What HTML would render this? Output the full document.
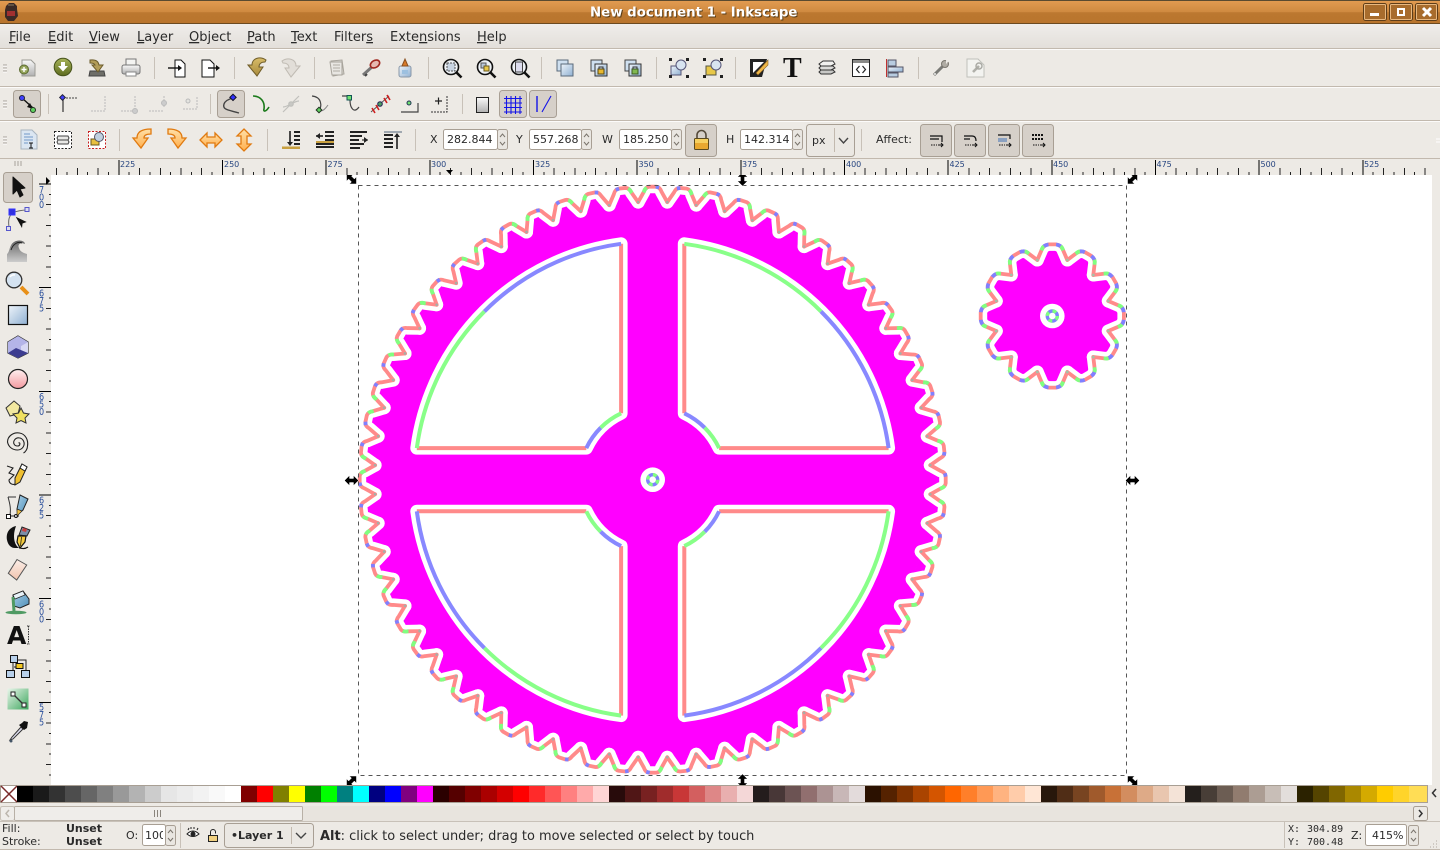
<!DOCTYPE html>
<html><head><meta charset="utf-8"><title>New document 1 - Inkscape</title>
<style>
html,body{margin:0;padding:0;background:#edeae5;width:1440px;height:850px;overflow:hidden}
svg{position:absolute;left:0;top:0;display:block}
text{font-family:"DejaVu Sans","Liberation Sans",sans-serif;fill:#2a2a2a}
.m{font-size:13px}.s{font-size:11px}.b{font-weight:bold}
.r{font-size:8px;fill:#274580}
.v{font-size:9.5px;fill:#2a4f9c}
#pal{position:absolute;left:17px;top:786px;height:16px;display:flex}
#pal i{display:block;width:16px;height:16px}
</style></head><body>
<svg width="1440" height="850" viewBox="0 0 1440 850" xmlns="http://www.w3.org/2000/svg">
<defs>
<linearGradient id="tg" x1="0" y1="0" x2="0" y2="1"><stop offset="0" stop-color="#e39c52"/><stop offset=".5" stop-color="#cf8a40"/><stop offset=".52" stop-color="#bc7830"/><stop offset="1" stop-color="#b8742c"/></linearGradient>
<linearGradient id="mg" x1="0" y1="0" x2="0" y2="1"><stop offset="0" stop-color="#efedea"/><stop offset="1" stop-color="#e3dfda"/></linearGradient>
<linearGradient id="bl" x1="0" y1="0" x2="1" y2="1"><stop offset="0" stop-color="#eef4fa"/><stop offset="1" stop-color="#8fb0d2"/></linearGradient>
<linearGradient id="gr" x1="0" y1="0" x2="0" y2="1"><stop offset="0" stop-color="#fafafa"/><stop offset="1" stop-color="#b0b0b0"/></linearGradient>
<linearGradient id="ol" x1="0" y1="0" x2="0" y2="1"><stop offset="0" stop-color="#a8b45a"/><stop offset="1" stop-color="#5d6b1e"/></linearGradient>
<linearGradient id="or" x1="0" y1="0" x2="0" y2="1"><stop offset="0" stop-color="#ffe0a8"/><stop offset="1" stop-color="#ffb050"/></linearGradient>
<linearGradient id="ug" x1="0" y1="0" x2="0" y2="1"><stop offset="0" stop-color="#d8bc68"/><stop offset="1" stop-color="#a88a3c"/></linearGradient>
<linearGradient id="pk" x1="0" y1="0" x2="0" y2="1"><stop offset="0" stop-color="#fff0f0"/><stop offset="1" stop-color="#f49aa0"/></linearGradient>
<linearGradient id="er" x1="0" y1="0" x2="0" y2="1"><stop offset="0" stop-color="#fbeee8"/><stop offset="1" stop-color="#f2c4ae"/></linearGradient>
<linearGradient id="gd" x1="0" y1="0" x2="1" y2="1"><stop offset="0" stop-color="#e8f5ea"/><stop offset="1" stop-color="#3fa85f"/></linearGradient>
<linearGradient id="wv" x1="0" y1="0" x2="0" y2="1"><stop offset="0" stop-color="#666"/><stop offset="1" stop-color="#ccc"/></linearGradient>
<linearGradient id="bk" x1="0" y1="0" x2="1" y2="1"><stop offset="0" stop-color="#a8d0e8"/><stop offset="1" stop-color="#4f8fb8"/></linearGradient>
<clipPath id="cv"><rect x="51" y="175" width="1381" height="610"/></clipPath>
<clipPath id="rt"><rect x="54" y="158" width="1378" height="18"/></clipPath>
<clipPath id="rl"><rect x="35" y="177" width="17" height="608"/></clipPath>

<!-- large gear tooth chain -->
<path id="L0" d="M-14.55,-277.6 L-8.8,-288 Q-7.2,-292.6 -3.5,-293 L3.5,-293 Q7.2,-292.6 8.8,-288 L14.55,-277.6"/>
<g id="L1"><use href="#L0"/><use href="#L0" transform="rotate(6)"/></g>
<g id="L2"><use href="#L1"/><use href="#L1" transform="rotate(12)"/><use href="#L1" transform="rotate(24)"/></g>
<g id="L3"><use href="#L2"/><use href="#L2" transform="rotate(36)"/><use href="#L2" transform="rotate(72)"/><use href="#L2" transform="rotate(108)"/><use href="#L2" transform="rotate(144)"/></g>
<g id="L4"><use href="#L3"/><use href="#L3" transform="rotate(180)"/></g>
<g id="D0"><path d="M-9.2,-287.3 L-8.8,-288 Q-8,-290.6 -6,-292" stroke="#80ff80"/><path d="M3,-293 L6.4,-292.2" stroke="#8080ff"/><circle cx="14.55" cy="-277.6" r="1.3" fill="#a4b0a8"/></g>
<g id="D0b"><path d="M-6.4,-292.2 L-3,-293" stroke="#8080ff"/><path d="M6,-292 Q8,-290.6 8.8,-288 L9.2,-287.3" stroke="#80ff80"/><circle cx="14.55" cy="-277.6" r="1.3" fill="#a4b0a8"/></g>
<g id="D1"><use href="#D0"/><use href="#D0b" transform="rotate(6)"/></g>
<g id="D2"><use href="#D1"/><use href="#D1" transform="rotate(12)"/><use href="#D1" transform="rotate(24)"/></g>
<g id="D3"><use href="#D2"/><use href="#D2" transform="rotate(36)"/><use href="#D2" transform="rotate(72)"/><use href="#D2" transform="rotate(108)"/><use href="#D2" transform="rotate(144)"/></g>
<g id="D4"><use href="#D3"/><use href="#D3" transform="rotate(180)"/></g>

<!-- small gear chain -->
<path id="S0" d="M-15,-56 L-10.5,-66.5 Q-8.500,-71 -3.500,-71.600 L3.500,-71.600 Q8.500,-71 10.5,-66.5 L15,-56"/>
<g id="S1"><use href="#S0"/><use href="#S0" transform="rotate(30)"/><use href="#S0" transform="rotate(60)"/></g>
<g id="S2"><use href="#S1"/><use href="#S1" transform="rotate(90)"/><use href="#S1" transform="rotate(180)"/><use href="#S1" transform="rotate(270)"/></g>
<g id="T0"><path d="M-10.9,-65.6 L-10.5,-66.5 Q-10,-68.500 -8.4,-69.8" stroke="#80ff80"/><path d="M-8.4,-69.8 Q-6.500,-71.2 -3.8,-71.5" stroke="#8080ff"/><path d="M3.8,-71.5 Q6.500,-71.2 8.4,-69.8" stroke="#8080ff"/><path d="M8.4,-69.8 Q10,-68.500 10.5,-66.5 L10.9,-65.6" stroke="#80ff80"/><circle cx="15" cy="-56" r="1.4" fill="#a4c0a8"/></g>
<g id="T1"><use href="#T0"/><use href="#T0" transform="rotate(30)"/><use href="#T0" transform="rotate(60)"/></g>
<g id="T2"><use href="#T1"/><use href="#T1" transform="rotate(90)"/><use href="#T1" transform="rotate(180)"/><use href="#T1" transform="rotate(270)"/></g>

<!-- quarter hole -->
<path id="Q" d="M-31.6,-235.9 L-31.6,-66.4 A73.5,73.5 0 0 0 -66.4,-31.6 L-235.9,-31.6 A238,238 0 0 1 -31.6,-235.9 Z"/>
<g id="QC" fill="none" stroke-width="4">
<path d="M-31.6,-235.9 L-31.6,-66.4" stroke="#ff8a8a"/>
<path d="M-66.4,-31.6 L-235.9,-31.6" stroke="#ff8a8a"/>
<path d="M-235.9,-31.6 A238,238 0 0 1 -168.3,-168.3" stroke="#88ff88"/>
<path d="M-168.3,-168.3 A238,238 0 0 1 -31.6,-235.9" stroke="#8888ff"/>
<path d="M-31.6,-66.4 A73.5,73.5 0 0 0 -52,-52" stroke="#88ff88"/>
<path d="M-52,-52 A73.5,73.5 0 0 0 -66.4,-31.6" stroke="#8888ff"/>
</g>
<g id="ring"><circle r="12.3" fill="#fff"/><circle r="5" fill="#fff" stroke="#8080ff" stroke-width="3.4"/><circle r="5" fill="none" stroke="#80ff80" stroke-width="3.4" stroke-dasharray="3.93 3.93"/></g>

<!-- spin -->
<g id="sp"><rect x=".5" y=".5" width="10" height="20" rx="2" fill="#e9e6e1" stroke="#a89f94"/><path d="M3,8 L5.5,5 L8,8 M3,13 L5.5,16 L8,13" fill="none" stroke="#7a746c"/></g>
<g id="grip"><path d="M3,0h4M3,3h4M3,6h4" stroke="#a8a29a"/><path d="M3,1h4M3,4h4M3,7h4" stroke="#fff"/></g>
<path id="ha" d="M-7,0 L-2,-5 V-2 H2 V-5 L7,0 L2,5 V2 H-2 V5 Z" fill="#000" stroke="#fff" stroke-width=".4"/>
<g id="lens"><circle cx="-1" cy="-1" r="7.5" fill="#eef2f6" stroke="#111" stroke-width="1.6"/><path d="M4.5,4.5 L9.5,9.5" stroke="#111" stroke-width="2.6"/></g>
</defs>

<!-- title bar -->
<rect width="1440" height="24" fill="url(#tg)"/>
<rect width="1440" height="1" fill="#5a4a30"/>
<rect y="23" width="1440" height="1" fill="#6b4a20"/>
<g transform="translate(11,12)"><path d="M-5,-6 L-2,-9 H3 L6,-6 V-3 L7,4 L3,9 H-3 L-6,5 L-6,-2 Z" fill="#3a2a26"/><rect x="-4" y="-1" width="8" height="5" fill="#a03030"/><path d="M-3,-7h6" stroke="#8a7a60"/></g>
<text x="590" y="16.5" class="b" font-size="13.33" style="fill:#3a2a10" opacity=".75" dx="1" dy="1">New document 1 - Inkscape</text>
<text x="590" y="16.5" class="b" font-size="13.33" style="fill:#fff">New document 1 - Inkscape</text>
<g fill="#a86c2c" stroke="#5e3d18"><rect x="1363.5" y="3.5" width="23" height="17" rx="2"/><rect x="1389.5" y="3.5" width="23" height="17" rx="2"/><rect x="1415.5" y="3.5" width="22" height="17" rx="2"/></g>
<g fill="none" stroke="#e8b880"><rect x="1364.5" y="4.5" width="21" height="15" rx="1"/><rect x="1390.5" y="4.5" width="21" height="15" rx="1"/><rect x="1416.5" y="4.5" width="20" height="15" rx="1"/></g>
<rect x="1370" y="13" width="9" height="3" fill="#fff"/>
<rect x="1398" y="9" width="6" height="6" fill="none" stroke="#fff" stroke-width="2"/>
<path d="M1423,8 L1431,16 M1431,8 L1423,16" stroke="#fff" stroke-width="3"/>

<!-- menu -->
<rect y="24" width="1440" height="24" fill="url(#mg)"/>
<rect y="48" width="1440" height="1" fill="#c2b9ae"/><rect y="49" width="1440" height="1" fill="#fff" opacity=".8"/>
<g class="m">
<text class="m" x="9" y="41"><tspan text-decoration="underline">F</tspan>ile</text>
<text class="m" x="48" y="41"><tspan text-decoration="underline">E</tspan>dit</text>
<text class="m" x="89" y="41"><tspan text-decoration="underline">V</tspan>iew</text>
<text class="m" x="137" y="41"><tspan text-decoration="underline">L</tspan>ayer</text>
<text class="m" x="189" y="41"><tspan text-decoration="underline">O</tspan>bject</text>
<text class="m" x="247" y="41"><tspan text-decoration="underline">P</tspan>ath</text>
<text class="m" x="291" y="41"><tspan text-decoration="underline">T</tspan>ext</text>
<text class="m" x="334" y="41">Filter<tspan text-decoration="underline">s</tspan></text>
<text class="m" x="390" y="41">Exte<tspan text-decoration="underline">n</tspan>sions</text>
<text class="m" x="477" y="41"><tspan text-decoration="underline">H</tspan>elp</text>
</g>

<!-- toolbar lines -->
<rect y="86" width="1440" height="1" fill="#c2b9ae"/><rect y="87" width="1440" height="1" fill="#fff" opacity=".8"/>
<rect y="120" width="1440" height="1" fill="#c2b9ae"/><rect y="121" width="1440" height="1" fill="#fff" opacity=".8"/>
<rect y="158" width="1440" height="1" fill="#c2b9ae"/>
<use href="#grip" y="65"/><use href="#grip" y="101"/><use href="#grip" y="137"/>
<path d="M15,161v5M18,161v5M21,161v5" stroke="#a8a29a"/>
<path d="M1436,139h4M1436,142h4" stroke="#fff"/>

<!-- separators -->
<g fill="#c8c1b8"><rect x="154" y="57" width="1" height="22"/><rect x="234" y="57" width="1" height="22"/><rect x="314" y="57" width="1" height="22"/><rect x="428" y="57" width="1" height="22"/><rect x="541" y="57" width="1" height="22"/><rect x="656" y="57" width="1" height="22"/><rect x="735" y="57" width="1" height="22"/><rect x="918" y="57" width="1" height="22"/>
<rect x="48" y="94" width="1" height="20"/><rect x="210" y="94" width="1" height="20"/><rect x="462" y="94" width="1" height="20"/>
<rect x="119" y="129" width="1" height="22"/><rect x="267" y="129" width="1" height="22"/><rect x="415" y="129" width="1" height="22"/><rect x="861" y="129" width="1" height="22"/></g>

<!-- toolbar 1 icons -->
<g transform="translate(28,68)"><path d="M-6,-8H3L7,-4V8H-6Z" fill="url(#gr)" stroke="#9a9a94"/><circle cx="-4" cy="1.500" r="4.500" fill="#94a45a" stroke="#5a6a30"/><path d="M-6.500,1.500h5M-4,-1v5" stroke="#fff" stroke-width="1.400"/></g>
<g transform="translate(63,67)"><circle r="8.800" fill="url(#ol)" stroke="#46521a"/><path d="M-2,-5H2V-1H5L0,4.500L-5,-1H-2Z" fill="#fff"/></g>
<g transform="translate(97,68)"><path d="M-7,3H7L8,8H-8Z" fill="#6e6e68" stroke="#444"/><path d="M-7,-8 Q1,-9 2,-3 H6 L1,4 L-5,-3 H-2 Q-3,-5 -7,-5Z" fill="#b29c58" stroke="#6c5c2c"/></g>
<g transform="translate(131,68)"><rect x="-5" y="-9" width="10" height="7" fill="#f4f4f2" stroke="#777"/><rect x="-9" y="-3" width="18" height="9" rx="2" fill="url(#gr)" stroke="#777"/><rect x="-5" y="4" width="10" height="4" fill="#fff" stroke="#888"/></g>
<g transform="translate(178,68)"><path d="M-3,-8H3L7,-4V9H-3Z" fill="#fff" stroke="#111"/><path d="M-10,0H2" stroke="#111" stroke-width="1.400"/><path d="M0,-3L4,0L0,3Z" fill="#111"/></g>
<g transform="translate(211,68)"><path d="M-9,-8H-1L3,-4V9H-9Z" fill="#fff" stroke="#111"/><path d="M-3,0H6" stroke="#111" stroke-width="1.400"/><path d="M5,-3L9,0L5,3Z" fill="#111"/></g>
<g transform="translate(257,67)"><path d="M-9,-2 L0,9 L6,0 H2 C2,-3 4,-5 8,-5 L9,-7 C3,-11 -5,-9 -5,-2Z" fill="url(#ug)" stroke="#6f5c28"/></g>
<g transform="translate(291,68)"><path d="M9,-2 L0,9 L-6,0 H-2 C-2,-3 -4,-5 -8,-5 L-9,-7 C-3,-11 5,-9 5,-2Z" fill="#e2ded8" stroke="#c0bbb3"/></g>
<g transform="translate(337,68)" stroke="#a8a49c"><path d="M-6,-7L5,-8L7,6L-4,8Z" fill="#dcdad5"/><path d="M-7,-6H5V7H-5Z" fill="#e8e6e2"/><path d="M-4,-3H3M-4,0H3M-4,3H3" stroke="#b0aca4"/></g>
<g transform="translate(371,68)"><path d="M-8,7 L2,-2" stroke="#777" stroke-width="3"/><path d="M-6,8 L-4,6" stroke="#444" stroke-width="2"/><ellipse cx="4" cy="-4" rx="5" ry="3.500" fill="#e6b8b0" stroke="#a02820" stroke-width="1.600" transform="rotate(-30 4 -4)"/></g>
<g transform="translate(405,68)"><rect x="-6" y="-2" width="12" height="11" rx="2" fill="url(#bl)" stroke="#8a98a8"/><path d="M-3,-2 L0,-9 L3,-2Z" fill="#d87a28" stroke="#8a5020"/><rect x="-3" y="2" width="6" height="4" fill="#9cc0e0"/></g>
<g transform="translate(452,68)"><use href="#lens"/><rect x="-5" y="-5" width="8" height="8" fill="#c8d4e2" stroke="#555" stroke-dasharray="2 1"/></g>
<g transform="translate(486,68)"><use href="#lens"/><rect x="-5" y="-5" width="5" height="5" fill="#b8c8dc" stroke="#555"/><rect x="-2" y="-2" width="5" height="5" fill="#e8c848" stroke="#6a5a20"/></g>
<g transform="translate(520,68)"><use href="#lens"/><rect x="-4.500" y="-6" width="7" height="10" fill="#dde" stroke="#444"/></g>
<g transform="translate(565,68)"><rect x="-8" y="-8" width="11" height="11" fill="#cfe0f0" stroke="#5a6a7a"/><rect x="-4" y="-4" width="12" height="12" fill="url(#bl)" stroke="#5a6a7a"/></g>
<g transform="translate(599,68)"><rect x="-8" y="-8" width="11" height="11" fill="#cfe0f0" stroke="#444"/><rect x="-4" y="-4" width="12" height="12" fill="url(#bl)" stroke="#333"/><rect x="-1" y="1" width="6" height="5" fill="#e8b830" stroke="#5a4a10"/><path d="M0,1v-2h4v2" fill="none" stroke="#333"/></g>
<g transform="translate(633,68)"><rect x="-8" y="-8" width="11" height="11" fill="#cfe0f0" stroke="#444"/><rect x="-4" y="-4" width="12" height="12" fill="url(#bl)" stroke="#333"/><rect x="-1" y="1" width="6" height="5" fill="#80b850" stroke="#3a5a20"/><path d="M0,1v-2h4v2" fill="none" stroke="#333"/></g>
<g transform="translate(679,68)"><rect x="-8" y="-2" width="10" height="9" fill="url(#bl)" stroke="#557"/><circle cx="2" cy="-3" r="5" fill="#d8e4f0" stroke="#557"/><path d="M-10,-10h3v3h-3zM7,-10h3v3h-3zM-10,7h3v3h-3zM7,7h3v3h-3z" fill="#222"/></g>
<g transform="translate(713,68)"><rect x="-7" y="-2" width="10" height="9" fill="#e8c848" stroke="#554"/><circle cx="3" cy="-3" r="5" fill="#d8e4f0" stroke="#557"/><path d="M-10,-10h3v3h-3zM7,-10h3v3h-3zM-10,7h3v3h-3zM7,7h3v3h-3z" fill="#222"/></g>
<g transform="translate(759,68)"><path d="M-9,-9H8L3,9H-9Z" fill="#222"/><path d="M-6,-6H5L-6,5Z" fill="#fff"/><path d="M9,-8 L-3,5 L-1,7 L9,-3Z" fill="#f0b848" stroke="#8a6020" stroke-width=".6"/></g>
<text x="783" y="77" font-size="28" font-weight="bold" style='font-family:"Liberation Serif",serif;fill:#111'>T</text>
<g transform="translate(827,68)" fill="#f2f2f0" stroke="#333"><path d="M-8,-4L-4,-7H6L8,-4L4,-2H-6Z"/><path d="M-8,0L-6,-2H6L8,0L4,2H-6Z" fill="#dcdcda"/><path d="M-8,4L-6,2H6L8,4L4,6H-6Z" fill="#c8c8c6"/></g>
<g transform="translate(861,68)"><rect x="-8.500" y="-8.500" width="17" height="17" fill="#fff" stroke="#222"/><rect x="-8" y="-8" width="16" height="3" fill="#8a8a88"/><path d="M-1.500,-2L-4.500,1.500L-1.500,5M1.500,-2L4.500,1.500L1.500,5" fill="none" stroke="#222" stroke-width="1.200"/></g>
<g transform="translate(895,68)"><rect x="-9" y="-9" width="1" height="18" fill="#c03030"/><rect x="-7" y="-8" width="8" height="6" fill="#b8cce0" stroke="#556"/><rect x="-7" y="-1" width="15" height="5" fill="url(#bl)" stroke="#556"/><rect x="-7" y="5" width="10" height="4" fill="#b8cce0" stroke="#556"/></g>
<g transform="translate(941,68)"><path d="M-7,7 L3,-3" stroke="#7a7a76" stroke-width="3"/><circle cx="4" cy="-4" r="3.500" fill="#b0aca4" stroke="#7a766e"/><path d="M5,-8L8,-7L5,-4Z" fill="#edeae5"/><circle cx="-6" cy="6" r="1" fill="#eee"/></g>
<g transform="translate(975,68)"><path d="M-8,-9H3L9,-3V9H-8Z" fill="#f3f3f0" stroke="#c0c0ba"/><path d="M-2,4 L4,-2" stroke="#b0b0aa" stroke-width="2.600"/><circle cx="4" cy="-2" r="3" fill="none" stroke="#a8a8a2" stroke-width="1.400"/></g>

<!-- toolbar 2 -->
<rect x="13.500" y="90.500" width="27" height="27" rx="3" fill="#d6d0c9" stroke="#a89f94"/>
<rect x="217.500" y="90.500" width="27" height="27" rx="3" fill="#d6d0c9" stroke="#a89f94"/>
<rect x="499.500" y="90.500" width="27" height="27" rx="3" fill="#d6d0c9" stroke="#a89f94"/>
<rect x="529.500" y="90.500" width="27" height="27" rx="3" fill="#d6d0c9" stroke="#a89f94"/>
<g transform="translate(27,104)"><path d="M-5,-6L6,4" stroke="#111" stroke-width="1.400"/><path d="M3,-1L6,5L0,3Z" fill="#111"/><circle cx="-5" cy="-6" r="2.500" fill="#4040ff" stroke="#223"/><circle cx="6" cy="6" r="2.500" fill="#60d060" stroke="#232"/></g>
<g transform="translate(68,104)" fill="none"><path d="M-5,-6V8" stroke="#333" stroke-width="1.200"/><path d="M-2,-6H10" stroke="#444" stroke-dasharray="2 1"/><rect x="-7.500" y="-8.500" width="4" height="4" fill="#4040ff" stroke="#223" transform="rotate(45 -5.500 -6.500)"/></g>
<g transform="translate(98,104)" fill="none" stroke="#bbb" stroke-dasharray="2 1"><path d="M7,-8V7H-8"/></g>
<g transform="translate(128,104)" fill="none" stroke="#bbb"><path d="M7,-8V7H-8" stroke-dasharray="2 1"/><circle cx="7" cy="7" r="2.500" fill="#ccc"/></g>
<g transform="translate(157,104)" fill="none" stroke="#bbb"><path d="M7,-8V4M-8,7H7" stroke-dasharray="2 1"/><circle cx="7" cy="-1" r="2.500" fill="#ccc"/></g>
<g transform="translate(188,104)" fill="none" stroke="#bbb"><path d="M9,-7V5H-5" stroke-dasharray="2 1"/><rect x="-2" y="-5" width="4" height="4" rx="2" fill="#e4e4e0"/></g>
<g transform="translate(231,104)" fill="none"><path d="M8,9 C-2,6 -9,6 -7,0 C-6,-3 -2,-5 2,-6" stroke="#444" stroke-width="1.400"/><rect x="0" y="-9" width="4.500" height="4.500" fill="#3030ff" stroke="#112" transform="rotate(45 2 -7)"/></g>
<g transform="translate(261,104)" fill="none" stroke="#1a7a1a" stroke-width="1.600"><path d="M-8,-8 C0,-8 4,-2 3,5 C2,8 5,8 8,3"/></g>
<g transform="translate(291,104)" fill="none" stroke="#c0c0bc" stroke-width="1.200"><path d="M-8,8L8,-8M-8,3C-3,3 3,-3 8,-3"/><circle r="2.200" fill="#c8c8c4"/></g>
<g transform="translate(320,104)" fill="none"><path d="M-8,-8C2,-7 2,2 -1,7" stroke="#444" stroke-width="1.200"/><path d="M1,7C3,7 6,4 8,1" stroke="#888"/><rect x="-3" y="4" width="4" height="4" fill="#60d060" stroke="#232" transform="rotate(45 -1 6)"/></g>
<g transform="translate(350,104)" fill="none"><path d="M-8,-8H-2M0,-4C0,4 4,10 9,3" stroke="#444" stroke-width="1.200"/><rect x="-3" y="-8.500" width="4.500" height="4.500" fill="#70e070" stroke="#155"/></g>
<g transform="translate(380,104)" fill="none"><path d="M-9,8L9,-8" stroke="#555"/><path d="M-8,4L-5,9M-4,1L-1,6M4,-6L7,-1M7,-9L10,-4" stroke="#d02020" stroke-width="1.600"/><circle r="2.300" fill="#4aa060" stroke="#225"/></g>
<g transform="translate(409,104)" fill="none"><path d="M9,-1V8H-8" stroke="#444" stroke-width="1.200"/><circle cy="-1" r="2" fill="#70e070" stroke="#235"/></g>
<g transform="translate(439,104)" fill="none"><path d="M8,-8V8H-9" stroke="#333" stroke-dasharray="2 1"/><path d="M-4,-3H3M-0.500,-6.500V0.500" stroke="#222" stroke-width="1.200"/></g>
<rect x="476.500" y="97.500" width="12" height="15" fill="url(#gr)" stroke="#222"/>
<path d="M504,98.500H522M504,103H522M504,107.500H522M504,112H522M506.500,96V114M511,96V114M515.500,96V114M520,96V114" stroke="#1414e8" stroke-width="1.100"/>
<path d="M537,96V112" stroke="#1414e8" stroke-width="1.400"/><path d="M542,112L551,96" stroke="#1414e8" stroke-width="1.100"/>

<!-- toolbar 3 -->
<g transform="translate(29,140)"><path d="M-8,-10H3L8,-5V9H-8Z" fill="#dbe6f2" stroke="#a8b4c0"/><path d="M-5,-6H1M-5,-3H4M-5,0H4M-5,3H-1" stroke="#7098c8"/><path d="M0,3h4M2,3v5M0,8h4" stroke="#111"/></g>
<g transform="translate(63,140)"><rect x="-8.500" y="-8.500" width="17" height="17" fill="#fff" stroke="#222" stroke-dasharray="2 1.500"/><path d="M-5,-4H5L6,-2L5,0H-5L-6,-2ZM-5,0H5L6,2L5,4H-5L-6,2Z" fill="#e8e8e6" stroke="#444"/></g>
<g transform="translate(97,140)"><rect x="-8.500" y="-8.500" width="17" height="17" fill="#fff" stroke="#c82020" stroke-dasharray="2 1.500"/><rect x="-6" y="-1" width="8" height="6" fill="#e8c040" stroke="#6a5820"/><circle cx="2" cy="-3" r="4.500" fill="#c0d0e0" stroke="#556"/></g>
<g fill="url(#or)" stroke="#e07a10" stroke-width="1.300">
<g transform="translate(142,139)"><path d="M-9,-1 L-1,9 L6,-1 H2 C2,-4 5,-5 9,-5 V-10 C0,-10 -5,-7 -5,-1Z"/></g>
<g transform="translate(177,139)"><path d="M9,-1 L1,9 L-6,-1 H-2 C-2,-4 -5,-5 -9,-5 V-10 C0,-10 5,-7 5,-1Z"/></g>
<g transform="translate(211,140)"><path d="M-11,0 L-4,-7 V-3 H4 V-7 L11,0 L4,7 V3 H-4 V7Z"/></g>
<g transform="translate(244,140)"><path d="M0,-11 L7,-4 H3 V4 H7 L0,11 L-7,4 H-3 V-4 H-7Z"/></g>
</g>
<g fill="#222">
<g transform="translate(291,140)"><path d="M-1,-9V3" stroke="#111" stroke-width="1.500"/><path d="M-4,2H2L-1,6Z"/><path d="M3,-9h6v2h-6zM3,-5h6v2h-6zM3,-1h6v2h-6zM3,3h6v2h-6z"/><rect x="-9" y="6.500" width="18" height="2.500" fill="#c8a040"/></g>
<g transform="translate(325,140)"><path d="M-9,-4H-2" stroke="#111" stroke-width="1.500"/><path d="M-9,-4L-5,-7V-1Z"/><path d="M0,-9h9v2h-9zM0,-5h9v2h-9zM0,-1h9v2h-9zM-9,3h18v2h-18z"/><rect x="-9" y="1" width="18" height="2" fill="#c8a040"/><path d="M-9,6h18v2h-18z"/></g>
<g transform="translate(359,140)"><path d="M-9,-9h17v2h-17zM-9,-5h12v2h-12zM-9,-1h9v2h-9zM-9,3h14v2h-14zM-9,7h10v2h-10z"/><path d="M3,0H9" stroke="#111"/><path d="M9,0L5,-3V3Z"/></g>
<g transform="translate(393,140)"><rect x="-9" y="-9" width="18" height="2" fill="#a0a8b0"/><path d="M-9,-6h9v2h-9zM-9,-2h9v2h-9zM-9,2h9v2h-9zM-9,6h9v2h-9z"/><path d="M4,-6V9" stroke="#111" stroke-width="1.500"/><path d="M4,-7L1,-3H7Z"/></g>
</g>

<text class="s" x="430" y="143">X</text>
<rect x="443.500" y="129.500" width="54" height="20" rx="2" fill="#fff" stroke="#a89f94"/><text class="s" x="447" y="143">282.844</text><use href="#sp" x="497" y="129"/>
<text class="s" x="516" y="143">Y</text>
<rect x="529.500" y="129.500" width="52" height="20" rx="2" fill="#fff" stroke="#a89f94"/><text class="s" x="533" y="143">557.268</text><use href="#sp" x="581" y="129"/>
<text class="s" x="602" y="143">W</text>
<rect x="619.500" y="129.500" width="52" height="20" rx="2" fill="#fff" stroke="#a89f94"/><text class="s" x="623" y="143">185.250</text><use href="#sp" x="671" y="129"/>
<rect x="685.500" y="124.500" width="31" height="32" rx="3" fill="#d6d0c9" stroke="#a89f94"/>
<path d="M697,139v-4a4,4 0 0 1 9,0v4" fill="none" stroke="#554a3a" stroke-width="1.600"/><rect x="694.500" y="138.500" width="14" height="11" rx="1" fill="#e8a830" stroke="#5a4a20"/><rect x="695" y="139" width="13" height="4" fill="#f6d060"/>
<text class="s" x="726" y="143">H</text>
<rect x="740.500" y="129.500" width="52" height="20" rx="2" fill="#fff" stroke="#a89f94"/><text class="s" x="744" y="143">142.314</text><use href="#sp" x="792" y="129"/>
<rect x="806.500" y="124.500" width="48" height="32" rx="3" fill="#ebe8e3" stroke="#a89f94"/>
<text class="s" x="812" y="144">px</text><rect x="834" y="128" width="1" height="24" fill="#c2b9ae"/><path d="M839,138L843.500,143L848,138" fill="none" stroke="#444" stroke-width="1.400"/>
<text class="s" x="876" y="143">Affect:</text>
<g fill="#d6d0c9" stroke="#a89f94"><rect x="920.500" y="124.500" width="31" height="32" rx="3"/><rect x="954.500" y="124.500" width="31" height="32" rx="3"/><rect x="988.500" y="124.500" width="31" height="32" rx="3"/><rect x="1022.500" y="124.500" width="31" height="32" rx="3"/></g>
<g fill="none" stroke="#111">
<g transform="translate(936,140)"><path d="M-6,-4H6V2M-6,-1H3" stroke-width="1.200"/><path d="M-5,5H1" stroke-dasharray="1.500 1"/><path d="M2,5H7M5,3L7,5L5,7"/></g>
<g transform="translate(970,140)"><path d="M-6,-4H2Q6,-4 6,1M-6,-1H0" stroke-width="1.200"/><path d="M-5,5H1" stroke-dasharray="1.500 1"/><path d="M2,5H7M5,3L7,5L5,7"/></g>
<g transform="translate(1004,140)"><path d="M-6,-5H6V-1" stroke-width="1.200"/><rect x="-6" y="-2" width="9" height="4" fill="#8aa0c0" stroke="none"/><path d="M-5,5H1" stroke-dasharray="1.500 1"/><path d="M2,5H7M5,3L7,5L5,7"/></g>
<g transform="translate(1038,140)"><path d="M-6,-5H6M-6,-1H6" stroke-width="2" stroke-dasharray="2 1"/><path d="M-5,5H1" stroke-dasharray="1.500 1"/><path d="M2,5H7M5,3L7,5L5,7"/></g>
</g>

<!-- rulers -->
<g clip-path="url(#rt)" shape-rendering="crispEdges" stroke="#222" fill="none">
<line x1="14.630" y1="173.500" x2="1432" y2="173.500" stroke-width="3" stroke-dasharray="1 9.367"/>
<line x1="14.630" y1="171.500" x2="1432" y2="171.500" stroke-width="7" stroke-dasharray="1 19.734"/>
<line x1="14.630" y1="167.500" x2="1432" y2="167.500" stroke-width="15" stroke-dasharray="1 102.670" stroke="#000"/>
</g>
<g class="r">
<text class="r" x="120" y="167">225</text><text class="r" x="224" y="167">250</text><text class="r" x="327.500" y="167">275</text><text class="r" x="431" y="167">300</text><text class="r" x="535" y="167">325</text><text class="r" x="638.500" y="167">350</text><text class="r" x="742" y="167">375</text><text class="r" x="846" y="167">400</text><text class="r" x="949.500" y="167">425</text><text class="r" x="1053" y="167">450</text><text class="r" x="1156.500" y="167">475</text><text class="r" x="1260.500" y="167">500</text><text class="r" x="1364" y="167">525</text>
</g>
<path d="M446,170H453L449.500,174Z" fill="#000"/>
<g clip-path="url(#rl)" shape-rendering="crispEdges" stroke="#222" fill="none">
<line x1="50" y1="79.830" x2="50" y2="785" stroke-width="2" stroke-dasharray="1 9.367"/>
<line x1="48.500" y1="79.830" x2="48.500" y2="785" stroke-width="5" stroke-dasharray="1 19.734"/>
<line x1="45" y1="79.830" x2="45" y2="785" stroke-width="12" stroke-dasharray="1 102.670" stroke="#000"/>
</g>
<g text-anchor="middle" transform="translate(41.5,0) scale(.85,1)">
<text class="v" x="0" y="193">7</text><text class="v" x="0" y="200.500">0</text><text class="v" x="0" y="208">0</text>
<text class="v" x="0" y="296.500">6</text><text class="v" x="0" y="304">7</text><text class="v" x="0" y="311.500">5</text>
<text class="v" x="0" y="400">6</text><text class="v" x="0" y="407.500">5</text><text class="v" x="0" y="415">0</text>
<text class="v" x="0" y="503.500">6</text><text class="v" x="0" y="511">2</text><text class="v" x="0" y="518.500">5</text>
<text class="v" x="0" y="607.500">6</text><text class="v" x="0" y="615">0</text><text class="v" x="0" y="622.500">0</text>
<text class="v" x="0" y="710.500">5</text><text class="v" x="0" y="718">7</text><text class="v" x="0" y="725.500">5</text>
</g>

<!-- canvas -->
<rect x="51" y="175" width="1381" height="610" fill="#fff"/>
<path d="M46,177V185L50,181Z" fill="#000"/>
<g clip-path="url(#cv)">
<g transform="translate(652.7,479.7)">
<circle r="278" fill="#f0f"/>
<use href="#L4" fill="#f0f" stroke="none"/>
<use href="#L4" fill="none" stroke="#fff" stroke-width="13" stroke-linejoin="round" stroke-linecap="round"/>
<use href="#L4" fill="none" stroke="#ff8a8a" stroke-width="3.800" stroke-linejoin="round" stroke-linecap="round"/>
<use href="#D4" fill="none" stroke-width="3.800"/>
<g fill="#fff" stroke="#fff" stroke-width="13" stroke-linejoin="round">
<use href="#Q"/><use href="#Q" transform="rotate(90)"/><use href="#Q" transform="rotate(180)"/><use href="#Q" transform="rotate(270)"/>
</g>
<use href="#QC"/><use href="#QC" transform="rotate(90)"/><use href="#QC" transform="rotate(180)"/><use href="#QC" transform="rotate(270)"/>
<use href="#ring"/>
</g>
<g transform="translate(1052.3,316)">
<circle r="57.5" fill="#f0f"/>
<use href="#S2" fill="#f0f" stroke="none"/>
<use href="#S2" fill="none" stroke="#fff" stroke-width="13" stroke-linejoin="round" stroke-linecap="round"/>
<use href="#S2" fill="none" stroke="#ff8a8a" stroke-width="3.800" stroke-linejoin="round" stroke-linecap="round"/>
<use href="#T2" fill="none" stroke-width="3.800"/>
<use href="#ring"/>
</g>
<rect x="358.500" y="185.500" width="768" height="590" fill="none" stroke="#555" stroke-dasharray="4 4" shape-rendering="crispEdges"/>
<use href="#ha" transform="translate(351.500,179) rotate(45)"/>
<use href="#ha" transform="translate(742.500,179) rotate(90)"/>
<use href="#ha" transform="translate(1132.500,179) rotate(-45)"/>
<use href="#ha" transform="translate(351.500,480.500)"/>
<use href="#ha" transform="translate(1132.500,480.500)"/>
<use href="#ha" transform="translate(351.500,781) rotate(-45)"/>
<use href="#ha" transform="translate(742.500,781) rotate(90)"/>
<use href="#ha" transform="translate(1132.500,781) rotate(45)"/>
</g>

<!-- left tools -->
<rect x="3.500" y="172.500" width="29" height="30" rx="3" fill="#d6d0c9" stroke="#a89f94"/>
<path d="M13,177 V194 L17,190 L20,197 L23,195 L20,189 L25,188 Z" fill="#111" stroke="#111" stroke-linejoin="round"/>
<g transform="translate(17,220)"><path d="M-8,7 C-9,0 -8,-3 -5,-7 C0,-9 4,-10 10,-10" fill="none" stroke="#666"/><rect x="-8" y="-11" width="6" height="6" fill="#3030e0" stroke="#33f"/><rect x="8" y="-12.500" width="4" height="4" fill="#dde" stroke="#55c"/><rect x="-10.500" y="6.500" width="4" height="4" fill="#dde" stroke="#55c"/><path d="M-1.300,-3.300 L9.700,2 L5.500,3.500 L5,8Z" fill="#111"/></g>
<g transform="translate(17,251)"><path d="M-10,11 V3 C-7,1 -8,-6 -3,-9 C2,-12 8,-10 8,-7 C4,-9 0,-7 2,-3 C3,1 7,2 10,3 V11Z" fill="url(#wv)"/><path d="M-6,-1 C-4,-7 1,-10 5,-8" fill="none" stroke="#222"/></g>
<g transform="translate(17,283)"><path d="M4,4 L11,11" stroke="#e89018" stroke-width="4"/><circle cx="-3" cy="-3" r="7.800" fill="#d4e2f0" stroke="#333" stroke-width="1.300"/><path d="M-7,-6 A5,5 0 0 1 -2,-8" fill="none" stroke="#fff" stroke-width="1.500"/></g>
<rect x="8.500" y="305.500" width="19" height="19" fill="url(#bl)" stroke="#111" stroke-width="1.200"/>
<g transform="translate(18,347)"><path d="M0,-11 L10,-5 V6 L0,11 L-10,6 V-5Z" fill="#8a8ad0" stroke="#333" stroke-width="1.200"/><path d="M-10,-5 L0,-11 L10,-5 L3,-1 V9 L0,11 L-10,6Z" fill="#b4b4e8"/><path d="M3,-1 V9 L10,6 V-5Z" fill="#d8d8f4"/><path d="M-10,6L-2,1L10,6L0,11Z" fill="#3c3c90"/></g>
<circle cx="18" cy="379" r="9.500" fill="url(#pk)" stroke="#222" stroke-width="1.200"/>
<g transform="translate(17,411)"><path d="M-3,-10 L3,-5 L1,3 L-7,5 L-11,-3Z" fill="#f2e8a0" stroke="#333"/><path d="M4,-3 L6.500,2 L12,3 L8,7 L9,12 L4,9.500 L-1,12 L0,7 L-4,3 L1.500,2Z" fill="#f0e060" stroke="#333"/></g>
<g transform="translate(17.500,443)" fill="none" stroke="#222" stroke-width="1.100"><path d="M1,0 C3,-1 3,3 0,3 C-3,3 -5,0 -3,-3 C-1,-6 4,-6 6,-2 C8,2 5,7 0,7 C-5,7 -9,4 -10,-1 C-10,-7 -4,-11 2,-10 C8,-9 11,-3 10,3 C10,6 8,9 6,10"/></g>
<g transform="translate(17,475)"><path d="M-10,-9 L-4,-7 L-8,-2 L-3,0 L-8,5 C-8,9 -3,11 0,8" fill="none" stroke="#222" stroke-width="1.100"/><path d="M5,-11 L10,-8 L3,7 L-2,10 L-2,3Z" fill="#f0c030" stroke="#222"/><path d="M5,-11 L10,-8 L8,-4 L3,-7Z" fill="#fff" stroke="#222"/></g>
<g transform="translate(17,507)"><path d="M-9,-10 H-1 M-9,-10 C-7,-3 -6,2 -7,8" fill="none" stroke="#333"/><path d="M-6,9H2" stroke="#222"/><rect x="-10.500" y="7.500" width="4" height="4" fill="#fff" stroke="#111"/><circle cx="-1" cy="9" r="1.500" fill="#fff" stroke="#111"/><path d="M3,-12 L11,-8 L6,3 L1,7 L0,2Z" fill="url(#bk)" stroke="#222"/><path d="M0,2 L5,4 L0,9Z" fill="#f2c040" stroke="#222" stroke-width=".7"/></g>
<g transform="translate(17,539)"><path d="M-1,-13 C-9,-11 -11,-5 -10,1 C-9,6 -6,9 -2,9 L2,9 C-1,7 -3,3 -3,-3 C-3,-7 -2,-10 -1,-13Z" fill="#111"/><path d="M2,8.500 C5,10 8,10 11,8" fill="none" stroke="#111" stroke-width="1.200"/><path d="M2,-4 L5,-12 L13,-9 L10,-3Z" fill="#7a8ea8" stroke="#222"/><path d="M6,-11 L10,-10 L9,-7 L5,-8Z" fill="#c84040"/><path d="M1,-3 L9,-3 L8,3 L3,9 L0,3Z" fill="#f4cc40" stroke="#111" stroke-width="1.200"/><path d="M4.500,-2 L3.500,7" stroke="#111" stroke-width=".7"/></g>
<path d="M17,559.500 L26.700,565 L16.700,580 L8.300,573.300Z" fill="url(#er)" stroke="#555"/>
<g transform="translate(17,603)"><ellipse cx="-1" cy="9.500" rx="10.500" ry="1.800" fill="#4f9a63"/><path d="M-4,-8 L6,-12 L12,-4 L12,1 L3,5 L-3,3Z" fill="url(#bk)" stroke="#222"/><path d="M-4,-8 L6,-12 L8,-8 L-2,-4Z" fill="#e8f2f8" stroke="#222" stroke-width=".7"/><path d="M-4,-6 L-3,8" fill="none" stroke="#4f9a63" stroke-width="3"/></g>
<text x="7" y="644" font-size="25" font-weight="bold" style="fill:#111">A</text>
<path d="M27,626h3M28.500,626v18M27,644h3" stroke="#333" fill="none" stroke-dasharray="1.500 1"/>
<g transform="translate(18,667)"><path d="M-5,-4V5M0,-7H8V3M-4,0H1" fill="none" stroke="#222"/><rect x="-7.500" y="-11.500" width="7" height="7" fill="#b8d0ea" stroke="#111"/><rect x="-2" y="-3.500" width="7" height="5" fill="#f4c820" stroke="#111"/><rect x="-11.500" y="3.500" width="8" height="7" fill="#b8d0ea" stroke="#111"/><rect x="3.500" y="3.500" width="8" height="7" fill="#b8d0ea" stroke="#111"/></g>
<g transform="translate(18,699)"><rect x="-10.500" y="-10.500" width="21" height="21" fill="url(#gd)"/><path d="M-5,-5 L6,6" stroke="#333" stroke-width="1.300"/><rect x="-7" y="-7" width="4" height="4" fill="#fff" stroke="#222"/><rect x="4" y="4" width="4" height="4" fill="#fff" stroke="#222"/></g>
<g transform="translate(18,731)"><path d="M3,-4 L-6,6 L-8,9 L-5,8 L5,-2Z" fill="#dde" stroke="#333"/><path d="M1,-6 L6,-1 L9,-3 L10,-9 L6,-10 L4,-8Z" fill="#111"/><circle cx="-7" cy="10" r="1.500" fill="#456"/></g>

<!-- palette -->
<rect y="785" width="1428" height="18" fill="#a89f94"/>
<rect x="1" y="786" width="16" height="16" fill="#fff"/><path d="M1,786 L17,802 M17,786 L1,802" stroke="#7a2a2a" stroke-width="1.500"/>
<path d="M1436,789 L1432.500,793 L1436,797" fill="none" stroke="#333" stroke-width="1.500"/>

<!-- scroll bar -->
<rect y="806" width="1427" height="15" fill="#e8e4de"/>
<rect x=".5" y="806.500" width="14" height="14" rx="2" fill="#efedea" stroke="#c8c1b8"/>
<path d="M9,810 L6,813.500 L9,817" fill="none" stroke="#bcb6ae" stroke-width="1.500"/>
<rect x="14.500" y="806.500" width="288" height="14" rx="1" fill="#efedea" stroke="#b8b0a6"/>
<path d="M154.500,810v7M157.500,810v7M160.500,810v7" stroke="#8a857d"/>
<rect x="1413.500" y="806.500" width="14" height="14" rx="2" fill="#ece9e4" stroke="#a89f94"/>
<path d="M1419,810 L1422,813.500 L1419,817" fill="none" stroke="#333" stroke-width="1.500"/>
<rect y="821" width="1440" height="1" fill="#c8c1b8"/>

<!-- status -->
<text class="s" x="2" y="832">Fill:</text><text class="s" x="2" y="845">Stroke:</text>
<text class="s b" x="66" y="832">Unset</text><text class="s b" x="66" y="845">Unset</text>
<text class="s" x="126" y="839">O:</text>
<rect x="142.500" y="824.500" width="23" height="21" rx="2" fill="#fff" stroke="#a89f94"/><svg x="143" y="825" width="20" height="20"><text class="s" x="2" y="14">100</text></svg>
<use href="#sp" x="165" y="825"/>
<rect x="180" y="823" width="1" height="25" fill="#c8c1b8"/>
<g transform="translate(193,834)"><path d="M-6,0 Q0,-6 6,0 Q0,5 -6,0Z" fill="#fff" stroke="#222"/><circle r="2.500" fill="#222"/><path d="M-5,-4L-4,-6M-2,-5V-7M1,-5V-7M4,-4L5,-6" stroke="#222"/></g>
<g transform="translate(213,835)"><rect x="-4.500" y="0.500" width="9" height="6" fill="#f0d080" stroke="#222"/><path d="M-2.500,0V-3a2.500,2.500 0 0 1 5,0V-1.500" fill="none" stroke="#222"/></g>
<rect x="224.500" y="823.500" width="89" height="24" rx="3" fill="#ebe8e3" stroke="#a89f94"/>
<text class="s b" x="231" y="839">•Layer 1</text>
<rect x="291" y="827" width="1" height="17" fill="#c2b9ae"/><path d="M296,833L301,838L306,833" fill="none" stroke="#444" stroke-width="1.400"/>
<text x="320" y="840" font-size="12.950"><tspan font-weight="bold">Alt</tspan>: click to select under; drag to move selected or select by touch</text>
<rect x="1284" y="822" width="1" height="26" fill="#c8c1b8"/>
<text x="1288" y="832" style='font-family:"DejaVu Sans Mono",monospace;font-size:10px'>X:</text><text x="1307" y="832" style='font-family:"DejaVu Sans Mono",monospace;font-size:10px'>304.89</text>
<text x="1288" y="845" style='font-family:"DejaVu Sans Mono",monospace;font-size:10px'>Y:</text><text x="1307" y="845" style='font-family:"DejaVu Sans Mono",monospace;font-size:10px'>700.48</text>
<text class="s" x="1351" y="839">Z:</text>
<rect x="1365.500" y="824.500" width="41" height="21" rx="2" fill="#fff" stroke="#a89f94"/><text class="s" x="1372" y="839">415%</text>
<use href="#sp" x="1408" y="825"/>
<path d="M1436,847h1M1433,847h1M1430,847h1M1436,844h1M1433,844h1M1436,841h1" stroke="#b0a89e"/>
<rect y="849" width="1440" height="1" fill="#c2b9ae"/>
</svg>
<div id="pal"><i style="background:#000000"></i><i style="background:#1a1a1a"></i><i style="background:#333333"></i><i style="background:#4d4d4d"></i><i style="background:#666666"></i><i style="background:#808080"></i><i style="background:#999999"></i><i style="background:#b3b3b3"></i><i style="background:#cccccc"></i><i style="background:#e6e6e6"></i><i style="background:#ececec"></i><i style="background:#f2f2f2"></i><i style="background:#f9f9f9"></i><i style="background:#ffffff"></i><i style="background:#800000"></i><i style="background:#ff0000"></i><i style="background:#808000"></i><i style="background:#ffff00"></i><i style="background:#008000"></i><i style="background:#00ff00"></i><i style="background:#008080"></i><i style="background:#00ffff"></i><i style="background:#000080"></i><i style="background:#0000ff"></i><i style="background:#800080"></i><i style="background:#ff00ff"></i><i style="background:#2b0000"></i><i style="background:#550000"></i><i style="background:#800000"></i><i style="background:#aa0000"></i><i style="background:#d40000"></i><i style="background:#ff0000"></i><i style="background:#ff2a2a"></i><i style="background:#ff5555"></i><i style="background:#ff8080"></i><i style="background:#ffaaaa"></i><i style="background:#ffd5d5"></i><i style="background:#280b0b"></i><i style="background:#501616"></i><i style="background:#782121"></i><i style="background:#a02c2c"></i><i style="background:#c83737"></i><i style="background:#d35f5f"></i><i style="background:#de8787"></i><i style="background:#e9afaf"></i><i style="background:#f4d7d7"></i><i style="background:#241c1c"></i><i style="background:#483737"></i><i style="background:#6c5353"></i><i style="background:#916f6f"></i><i style="background:#ac9393"></i><i style="background:#c8b7b7"></i><i style="background:#e3dbdb"></i><i style="background:#2b1100"></i><i style="background:#552200"></i><i style="background:#803300"></i><i style="background:#aa4400"></i><i style="background:#d45500"></i><i style="background:#ff6600"></i><i style="background:#ff7f2a"></i><i style="background:#ff9955"></i><i style="background:#ffb380"></i><i style="background:#ffccaa"></i><i style="background:#ffe6d5"></i><i style="background:#28170b"></i><i style="background:#502d16"></i><i style="background:#784421"></i><i style="background:#a05a2c"></i><i style="background:#c87137"></i><i style="background:#d38d5f"></i><i style="background:#deaa87"></i><i style="background:#e9c6af"></i><i style="background:#f4e3d7"></i><i style="background:#241f1c"></i><i style="background:#483e37"></i><i style="background:#6c5d53"></i><i style="background:#917c6f"></i><i style="background:#ac9d93"></i><i style="background:#c8beb7"></i><i style="background:#e3dedb"></i><i style="background:#2b2200"></i><i style="background:#554400"></i><i style="background:#806600"></i><i style="background:#aa8800"></i><i style="background:#d4aa00"></i><i style="background:#ffcc00"></i><i style="background:#ffd42a"></i><i style="background:#ffdd55;width:18px"></i></div>
</body></html>
